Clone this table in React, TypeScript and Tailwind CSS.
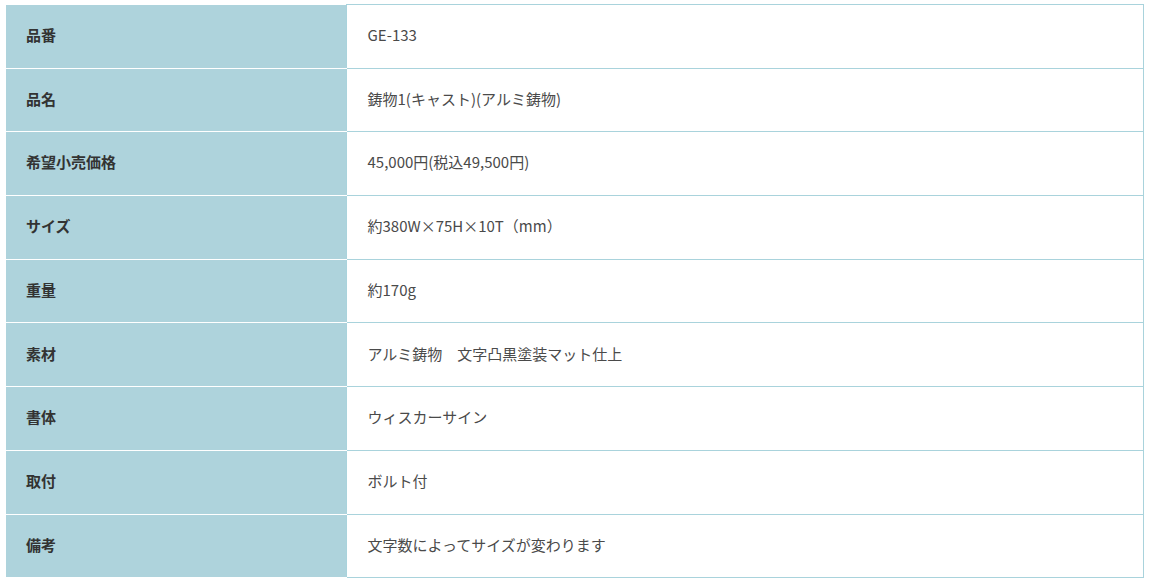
import React from 'react';

const rows: [string, string][] = [
  ['品番', 'GE-133'],
  ['品名', '鋳物1(キャスト)(アルミ鋳物)'],
  ['希望小売価格', '45,000円(税込49,500円)'],
  ['サイズ', '約380W×75H×10T（mm）'],
  ['重量', '約170g'],
  ['素材', 'アルミ鋳物　文字凸黒塗装マット仕上'],
  ['書体', 'ウィスカーサイン'],
  ['取付', 'ボルト付'],
  ['備考', '文字数によってサイズが変わります'],
];

export default function App() {
  return (
    <div
      className="bg-white min-h-screen pt-[4px] pl-[6px]"
      style={{ fontFamily: '"Noto Sans CJK JP", "Noto Sans", sans-serif' }}
    >
      <table className="w-[1138px] border-collapse">
        <tbody>
          {rows.map(([label, value]) => (
            <tr key={label} className="h-[63.7px]">
              <th className="w-[340px] bg-[#aed3dc] border-b border-white pl-5 pb-[2px] text-left align-middle text-[15px] font-bold text-[#333]">
                {label}
              </th>
              <td className="border border-[#a9d3dc] pl-[21px] pb-[2px] text-left align-middle text-[15px] text-[#4a4a4a]">
                {value}
              </td>
            </tr>
          ))}
        </tbody>
      </table>
    </div>
  );
}
